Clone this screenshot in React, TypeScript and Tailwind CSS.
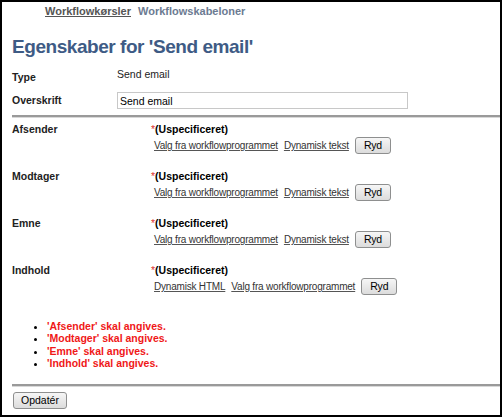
import React from 'react';

const font = { fontFamily: '"Liberation Sans", Arial, sans-serif' };

function Ryd() {
    return (
        <button className="h-[17px] px-[8px] text-[10.5px] leading-none text-black border border-[#8e8f8f] rounded-[3px] bg-gradient-to-b from-[#f6f6f6] to-[#dcdcdc]">
            Ryd
        </button>
    );
}

function Field({ label, links }: { label: string; links: string[] }) {
    return (
        <div className="flex">
            <div className="w-[139px] shrink-0 text-[10.5px] leading-[14px] font-bold text-[#222]">{label}</div>
            <div className="flex flex-col">
                <div className="text-[10.5px] font-bold text-black leading-[14px]">
                    <span className="text-[#e03030] font-normal">*</span>(Uspecificeret)
                </div>
                <div className="flex items-center h-[17px] mt-[1px] gap-[6px] pl-[3px] text-[10px] tracking-[-0.2px] text-[#333]">
                    {links.map(l => (
                        <a key={l} href="#" className="underline decoration-[#555]">{l}</a>
                    ))}
                    <Ryd />
                </div>
            </div>
        </div>
    );
}

export default function App() {
    const errors = ["'Afsender' skal angives.", "'Modtager' skal angives.", "'Emne' skal angives.", "'Indhold' skal angives."];
    return (
        <div style={font} className="w-[502px] h-[417px] border-2 border-black bg-white overflow-hidden text-[11px]">
            <div className="flex gap-[7px] pl-[43px] pt-[3px] text-[11px] leading-[13px] font-bold">
                <a href="#" className="text-[#555] underline">Workflowkørsler</a>
                <a href="#" className="text-[#6c7b92]">Workflowskabeloner</a>
            </div>
            <h1 className="pl-[10px] pt-[17px] text-[19px] leading-[24px] font-bold text-[#3e5b85] tracking-[-0.45px]">
                Egenskaber for 'Send email'
            </h1>
            <div className="pl-[10px] pt-[8px]">
                <div className="flex items-start">
                    <div className="w-[105px] pt-[3px] text-[10.5px] leading-[14px] font-bold text-[#222]">Type</div>
                    <div className="text-[10.5px] leading-[14px] text-[#222]">Send email</div>
                </div>
                <div className="flex items-center mt-[8px] h-[17px]">
                    <div className="w-[105px] text-[10.5px] font-bold text-[#222]">Overskrift</div>
                    <input
                        defaultValue="Send email"
                        className="w-[291px] h-[17px] border border-[#c8c8c8] px-[2px] text-[10.5px] text-black outline-none"
                    />
                </div>
            </div>
            <div className="ml-[10px] mt-[6px] h-[3px] border-t-2 border-[#9a9a9a] border-b border-b-[#d8d8d8]" />
            <div className="pl-[10px] pt-[4px] flex flex-col gap-[15px]">
                <Field label="Afsender" links={['Valg fra workflowprogrammet', 'Dynamisk tekst']} />
                <Field label="Modtager" links={['Valg fra workflowprogrammet', 'Dynamisk tekst']} />
                <Field label="Emne" links={['Valg fra workflowprogrammet', 'Dynamisk tekst']} />
                <Field label="Indhold" links={['Dynamisk HTML', 'Valg fra workflowprogrammet']} />
            </div>
            <ul className="list-disc pl-[45px] pt-[25px] text-[10.5px] font-bold text-[#f01818] leading-[12.4px]">
                {errors.map(e => (
                    <li key={e} className="marker:text-black">{e}</li>
                ))}
            </ul>
            <div className="ml-[10px] mt-[14px] h-[3px] border-t-2 border-[#9a9a9a] border-b border-b-[#d8d8d8]" />
            <div className="pl-[11px] pt-[5px]">
                <button className="h-[17px] px-[7px] text-[10.5px] leading-none text-black border border-[#8e8f8f] rounded-[3px] bg-gradient-to-b from-[#f6f6f6] to-[#dcdcdc]">
                    Opdatér
                </button>
            </div>
        </div>
    );
}
